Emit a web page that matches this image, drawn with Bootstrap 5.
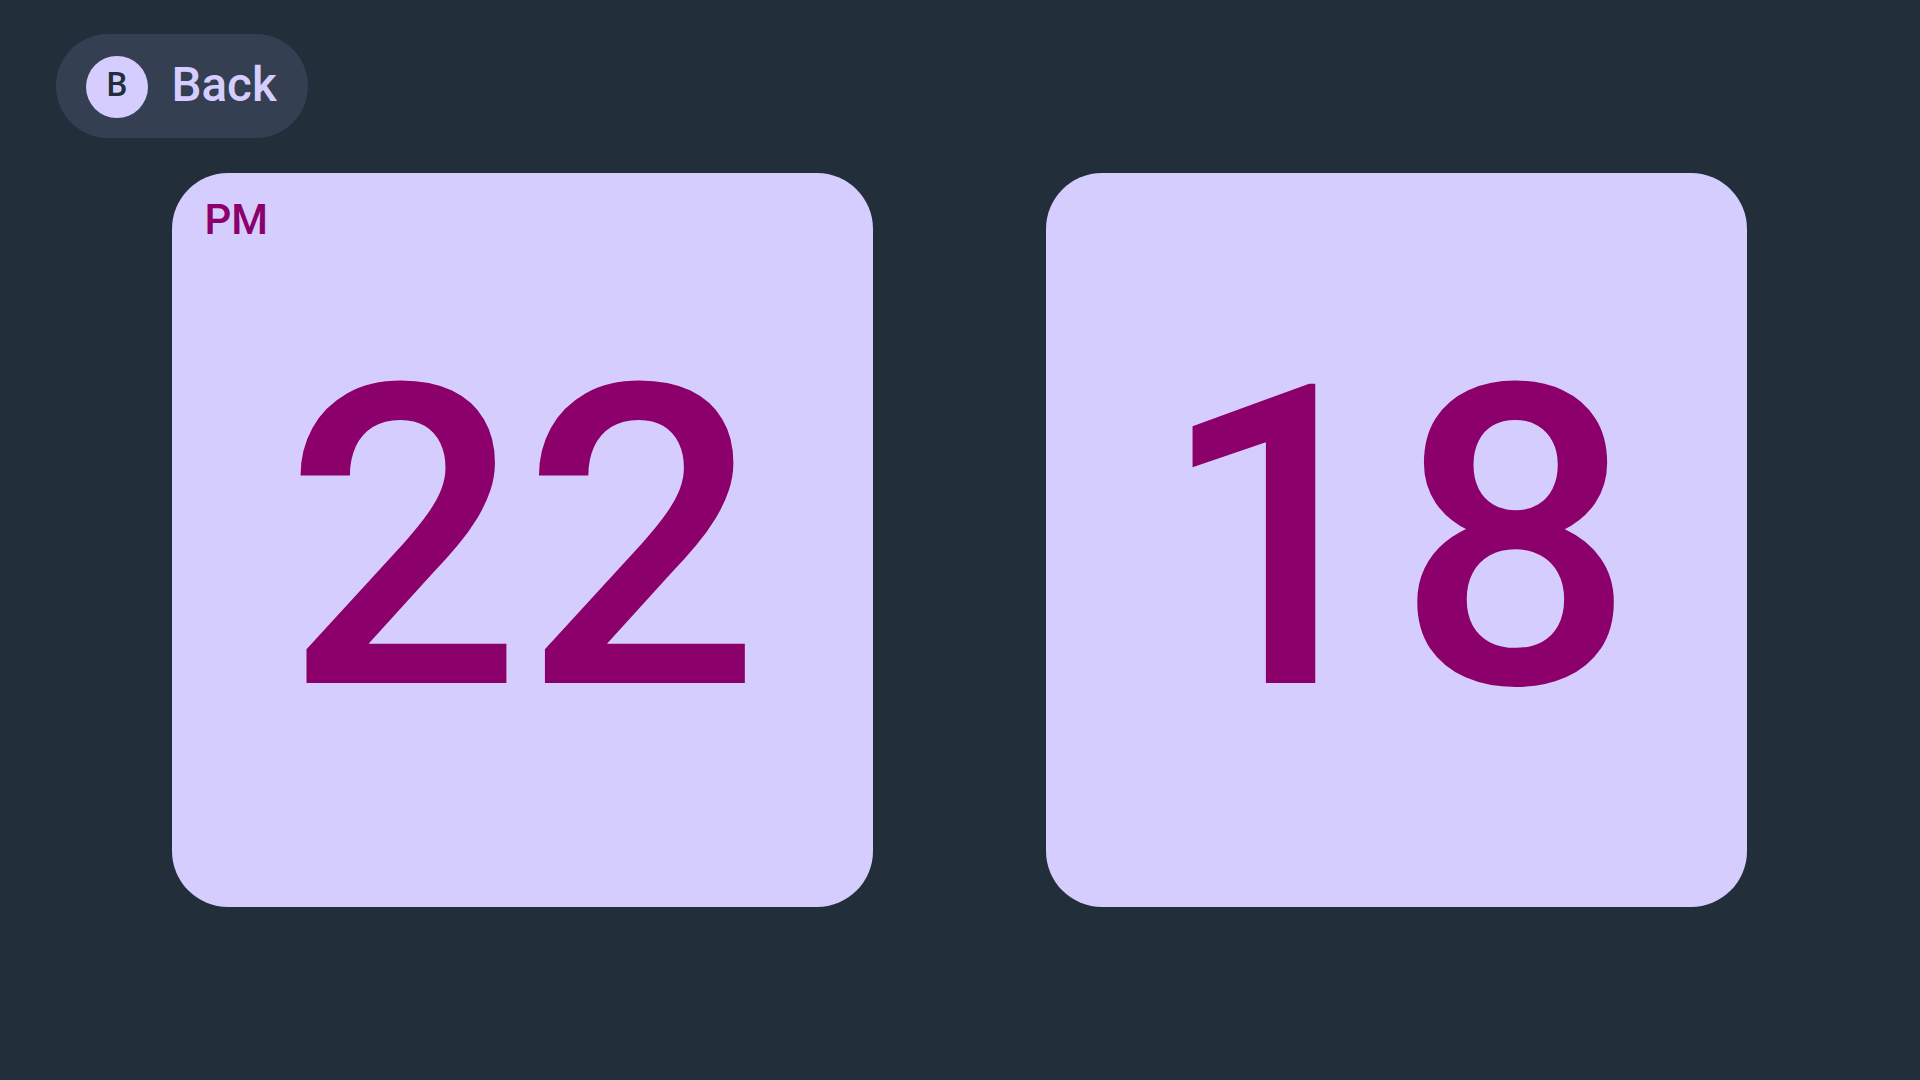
<!DOCTYPE html>
<html lang="en">
<head>
<meta charset="utf-8">
<meta name="viewport" content="width=device-width, initial-scale=1">
<title>Clock</title>
<link href="https://cdn.jsdelivr.net/npm/bootstrap@5.3.0/dist/css/bootstrap.min.css" rel="stylesheet">
<style>
body{background:#222f3b;font-family:Roboto,"Liberation Sans",sans-serif;height:1080px}
.topbar{padding:34px 0 0 56px;height:172.6px}
.back-pill{width:252px;height:104px;background:#343f51;color:#d6cdff;padding:1px 0 0 30px;gap:23.5px;border:0}
.key-dot{width:62px;height:62px;background:#d6cdff;color:#222f3b;font-size:33px;font-weight:500;line-height:58px}
.back-text{font-size:47.5px;font-weight:500;line-height:1;padding-bottom:2px}
.clock{padding:0 172.4px;gap:173.2px}
.tile{width:700.8px;height:734.4px;border-radius:56px;background:#d6cdff;color:#8c006c}
.digits{font-size:419.5px;font-weight:500;line-height:1;margin-left:-1px}
.period{left:32px;top:22.6px;font-size:42px;font-weight:500;line-height:50px}
</style>
</head>
<body class="overflow-hidden">
<header class="topbar"><button class="back-pill rounded-pill d-flex align-items-center"><span class="key-dot rounded-circle text-center">B</span><span class="back-text">Back</span></button></header>
<main class="clock d-flex">
<section class="tile position-relative d-flex align-items-center justify-content-center"><span class="period position-absolute">PM</span><span class="digits">22</span></section>
<section class="tile d-flex align-items-center justify-content-center"><span class="digits">18</span></section>
</main>
<script src="https://cdn.jsdelivr.net/npm/bootstrap@5.3.0/dist/js/bootstrap.bundle.min.js"></script>
</body>
</html>
